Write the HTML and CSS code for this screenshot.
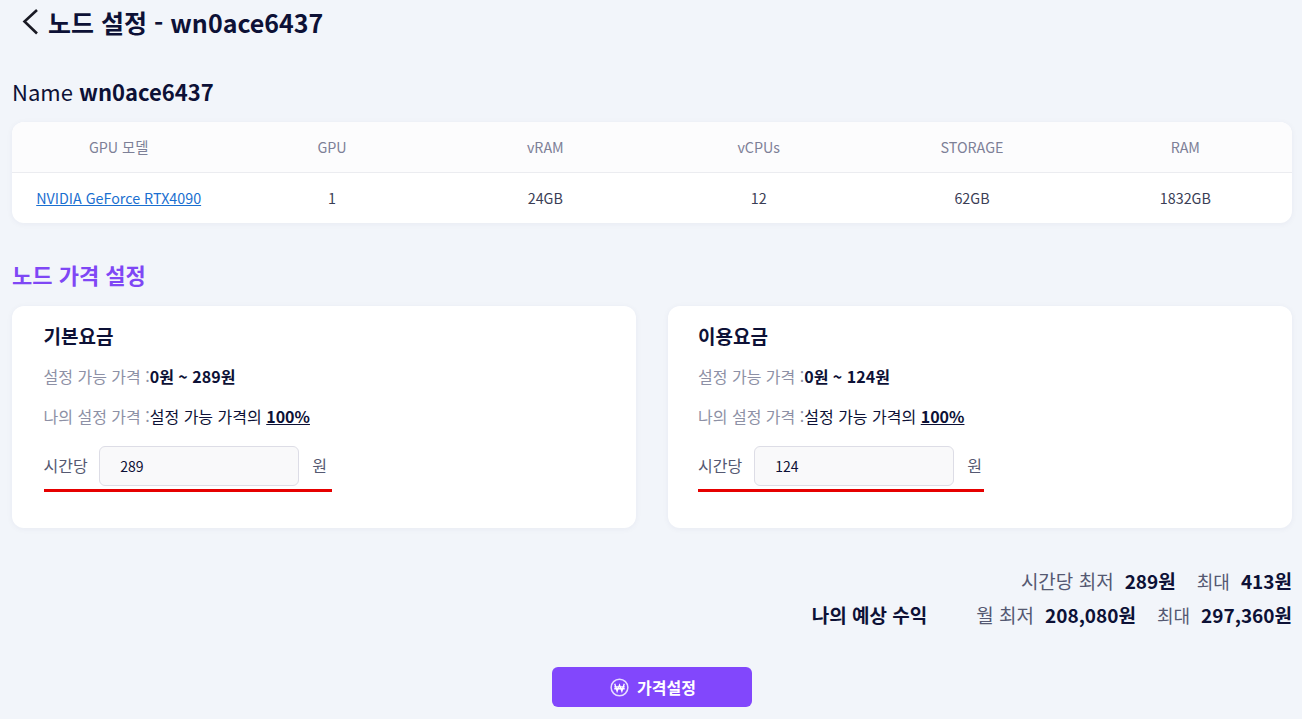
FILE: index.html
```html
<!DOCTYPE html>
<html lang="ko">
<head>
<meta charset="utf-8">
<title>노드 설정</title>
<link rel="stylesheet" href="styles.css">
</head>
<body>
<main class="page">
  <header class="title-row">
    <svg class="back" viewBox="0 0 20 28" width="20" height="28"><path d="M16 1 L3.5 12.5 L16 24.5" fill="none" stroke="#1a1a24" stroke-width="2.6"/></svg>
    <h1>노드 설정 - wn0ace6437</h1>
  </header>
  <h2 class="name">Name <b>wn0ace6437</b></h2>
  <section class="table">
    <div class="tr head">
      <div>GPU 모델</div><div>GPU</div><div>vRAM</div><div>vCPUs</div><div>STORAGE</div><div>RAM</div>
    </div>
    <div class="tr body">
      <div><a href="#">NVIDIA GeForce RTX4090</a></div><div>1</div><div>24GB</div><div>12</div><div>62GB</div><div>1832GB</div>
    </div>
  </section>
  <h2 class="section-title">노드 가격 설정</h2>
  <section class="cards">
    <article class="card">
      <h3>기본요금</h3>
      <p class="line"><span class="lbl">설정 가능 가격 :</span><b>0원 ~ 289원</b></p>
      <p class="line"><span class="lbl">나의 설정 가격 :</span><span>설정 가능 가격의 <b class="u">100%</b></span></p>
      <div class="field f1"><span class="fl">시간당</span><span class="input">289</span><span class="fl">원</span></div>
    </article>
    <article class="card">
      <h3>이용요금</h3>
      <p class="line"><span class="lbl">설정 가능 가격 :</span><b>0원 ~ 124원</b></p>
      <p class="line"><span class="lbl">나의 설정 가격 :</span><span>설정 가능 가격의 <b class="u">100%</b></span></p>
      <div class="field f2"><span class="fl">시간당</span><span class="input">124</span><span class="fl">원</span></div>
    </article>
  </section>
  <section class="earn">
    <div class="earn-row"><span class="m">시간당 최저</span><b>289원</b><span class="m m2">최대</span><b>413원</b></div>
    <div class="earn-row"><b class="earn-title">나의 예상 수익</b><span class="m">월 최저</span><b>208,080원</b><span class="m m2">최대</span><b>297,360원</b></div>
  </section>
  <div class="actions">
    <button class="btn" type="button">
      <svg viewBox="0 0 20 20" width="19" height="19"><circle cx="10" cy="10" r="8.8" fill="none" stroke="#e6dcff" stroke-width="1.6"/><path d="M5 6 L7.5 14 L10 7.5 L12.5 14 L15 6 M4.5 9.3 H15.5 M4.5 11.3 H15.5" fill="none" stroke="#fff" stroke-width="1.4"/></svg>
      <span>가격설정</span>
    </button>
  </div>
</main>
</body>
</html>
```
FILE: styles.css
```css
* { box-sizing: border-box; }
html, body { margin: 0; padding: 0; }
body {
  background: #f2f5fa;
  font-family: "Noto Sans CJK KR", "Noto Sans", sans-serif;
  color: #0d1136;
  height: 719px;
  overflow: hidden;
}
.page { padding: 0 10px 0 12px; }
.title-row { display: flex; align-items: center; height: 45px; gap: 7px; padding-left: 9px; }
.back { flex: none; }
h1 { margin: 0; font-size: 25px; line-height: 45px; font-weight: 700; }
.name { margin: 26px 0 0; font-size: 22px; line-height: 40px; font-weight: 400; height: 51px; }
.name b { font-weight: 700; }
.table { background: #fff; border-radius: 12px; box-shadow: 0 1px 6px rgba(30,40,90,.05); height: 101px; overflow: hidden; }
.tr { display: grid; grid-template-columns: repeat(6, 1fr); text-align: center; font-size: 14.3px; align-items: center; padding-bottom: 2px; }
.head { height: 51px; background: #fcfcfd; color: #7d8097; border-bottom: 1px solid #ebecf0; }
.body { height: 50px; color: #3a3d55; }
.body a { color: #1a6fd0; }
.section-title { margin: 34px 0 0; font-size: 22px; line-height: 34px; font-weight: 700; color: #7f47f5; height: 49px; }
.cards { display: grid; grid-template-columns: 624px 624px; gap: 32px; }
.card { background: #fff; border-radius: 12px; box-shadow: 0 1px 6px rgba(30,40,90,.05); height: 222px; padding: 16px 30px 0 31.5px; }
.card + .card { padding-left: 30px; }
h3 { margin: 0; font-size: 19px; line-height: 28px; font-weight: 700; }
.line { margin: 12px 0 0; font-size: 16px; line-height: 29px; height: 29px; display: flex; }
.line + .line { margin-top: 11px; }
.lbl { color: #8d90a5; }
.line b { font-weight: 700; }
.u { text-decoration: underline; }
.field { display: inline-flex; align-items: center; margin-top: 15px; height: 46px; border-bottom: 3px solid #e60000; padding-bottom: 3px; font-size: 16px; color: #555972; }
.fl { padding-bottom: 2px; }
.f1 { width: 288px; }
.f2 { width: 286px; }
.input { width: 200px; height: 40px; margin: 0 13px 0 12px; background: #f9f9fa; border: 1px solid #dddde6; border-radius: 6px; font-size: 14px; line-height: 39px; padding-left: 20px; color: #0d1136; }
.f1 .input { margin-left: 11.5px; }
.earn { margin-top: 36px; display: flex; flex-direction: column; align-items: flex-end; font-size: 19px; }
.earn-row { display: flex; height: 34px; line-height: 34px; }
.earn-row b { font-weight: 700; margin-left: 11px; }
.m { color: #555972; }
.m2 { margin-left: 21px; font-size: 18px; }
.earn-row .earn-title { margin: 0 49px 0 0; }
.actions { display: flex; justify-content: center; margin-top: 35px; }
.btn { width: 200px; height: 40px; border: 0; border-radius: 6px; padding: 0 0 0 2px; background: #8247fc; color: #fff; font: 700 16px "Noto Sans CJK KR", sans-serif; display: flex; align-items: center; justify-content: center; gap: 8px; }
```
